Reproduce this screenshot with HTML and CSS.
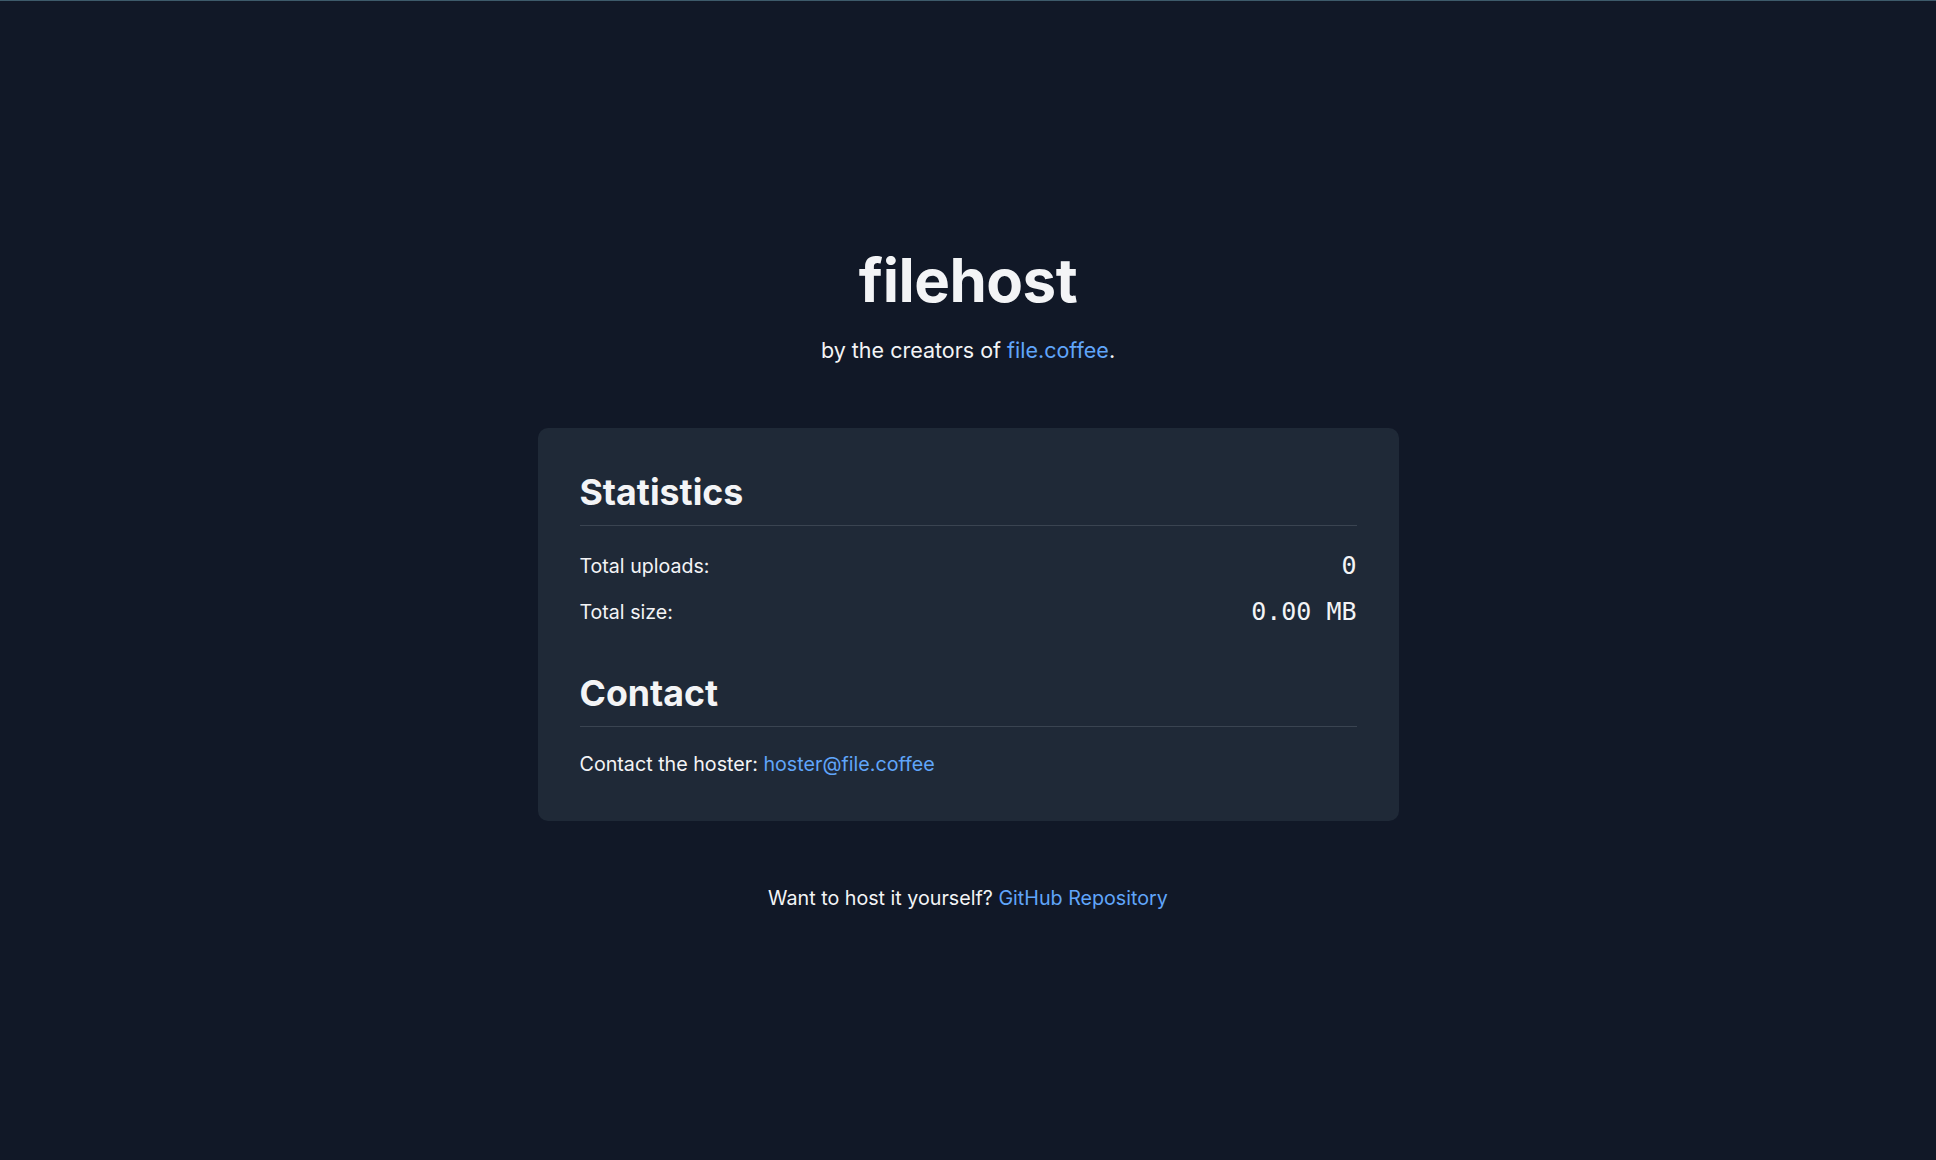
FILE: index.html
```html
<!DOCTYPE html>
<html lang="en">
<head>
<meta charset="utf-8">
<title>filehost</title>
<link rel="stylesheet" href="styles.css">
</head>
<body>
<div class="topline"></div>
<main class="page">
  <header class="hero">
    <h1 class="title">filehost</h1>
    <p class="subtitle">by the creators of <a href="#" class="link">file.coffee</a>.</p>
  </header>
  <section class="card">
    <div class="section">
      <h2 class="heading">Statistics</h2>
      <div class="stats">
        <div class="row"><span class="label">Total uploads:</span><span class="value">0</span></div>
        <div class="row"><span class="label">Total size:</span><span class="value">0.00 MB</span></div>
      </div>
    </div>
    <div class="section section-contact">
      <h2 class="heading">Contact</h2>
      <p class="text">Contact the hoster: <a href="#" class="link">hoster@file.coffee</a></p>
    </div>
  </section>
  <footer class="footer">
    <p class="text">Want to host it yourself? <a href="#" class="link">GitHub Repository</a></p>
  </footer>
</main>
</body>
</html>
```

FILE: styles.css
```css
html, body {
  margin: 0;
  padding: 0;
  background: #111827;
  min-height: 100%;
}
body {
  font-family: Inter, "Noto Sans", "Liberation Sans", sans-serif;
  color: #f3f4f6;
  min-height: 1160px;
}
.topline {
  height: 1px;
  background: #3d5a6a;
}
.page {
  display: flex;
  flex-direction: column;
  align-items: center;
  padding-top: 249px;
}
.hero {
  display: flex;
  flex-direction: column;
  align-items: center;
}
.title {
  margin: 0;
  font-size: 60px;
  line-height: 60px;
  font-weight: 700;
  letter-spacing: -0.5px;
  color: #f3f4f6;
}
.subtitle {
  margin: 26px 0 0;
  font-size: 21.5px;
  line-height: 28px;
  color: #f3f4f6;
}
.link {
  color: #60a5fa;
  text-decoration: none;
}
.card {
  box-sizing: border-box;
  width: 861px;
  margin-top: 64px;
  padding: 42px 42px 43px;
  background: #1f2937;
  border-radius: 10px;
}
.heading {
  margin: 0;
  padding-bottom: 10px;
  border-bottom: 1px solid #3a4451;
  font-size: 35.7px;
  line-height: 45px;
  font-weight: 700;
  color: #f3f4f6;
}
.stats {
  display: flex;
  flex-direction: column;
  gap: 10px;
  margin-top: 22px;
}
.row {
  display: flex;
  justify-content: space-between;
  align-items: center;
  height: 36px;
}
.label {
  font-size: 19.6px;
  line-height: 28px;
  color: #f3f4f6;
}
.value {
  font-family: "DejaVu Sans Mono", "Liberation Mono", monospace;
  font-size: 25px;
  line-height: 36px;
  color: #f3f4f6;
}
.section-contact {
  margin-top: 41px;
}
.text {
  margin: 23px 0 0;
  font-size: 19.7px;
  line-height: 28px;
  color: #f3f4f6;
}
.footer {
  margin-top: 40px;
}
```
